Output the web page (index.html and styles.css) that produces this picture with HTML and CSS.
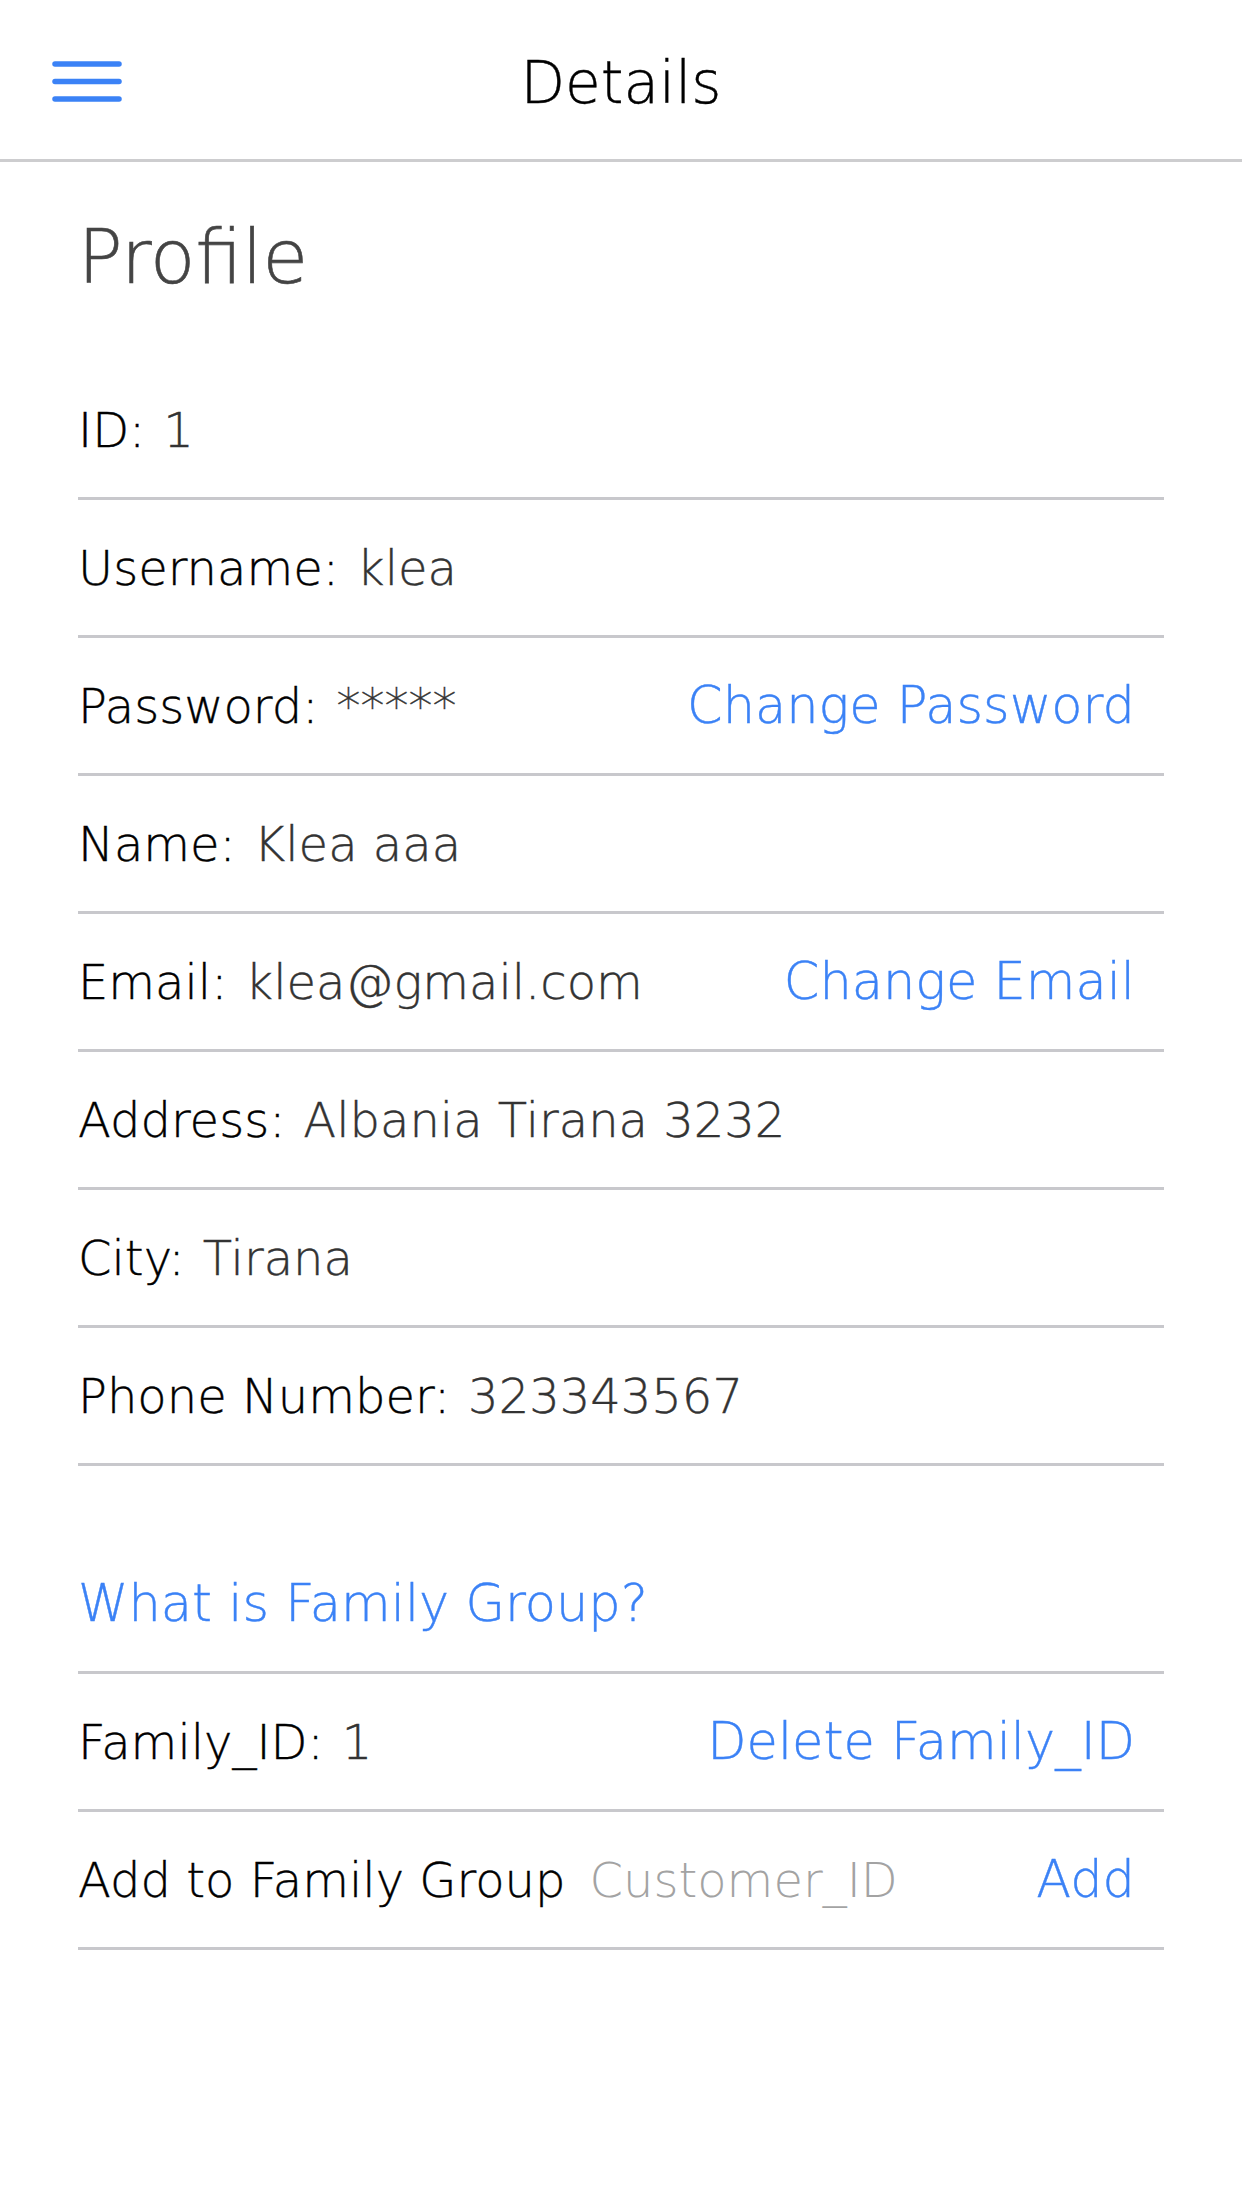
FILE: index.html
```html
<!DOCTYPE html>
<html lang="en">
<head>
<meta charset="utf-8">
<title>Details</title>
<link rel="stylesheet" href="styles.css">
</head>
<body>
<header class="topbar">
  <button class="menu-btn" aria-label="Menu">
    <svg width="70" height="46" viewBox="0 0 70 46">
      <line x1="3" y1="3" x2="67" y2="3"/>
      <line x1="3" y1="20.5" x2="67" y2="20.5"/>
      <line x1="3" y1="38" x2="67" y2="38"/>
    </svg>
  </button>
  <h1 class="topbar-title">Details</h1>
  <span></span>
</header>

<main class="content">
  <h2 class="page-title">Profile</h2>

  <section class="list">
    <div class="row"><span class="label">ID:</span><span class="value">1</span></div>
    <div class="row"><span class="label">Username:</span><span class="value">klea</span></div>
    <div class="row"><span class="label">Password:</span><span class="value">*****</span><a class="link push" href="#">Change Password</a></div>
    <div class="row"><span class="label">Name:</span><span class="value">Klea aaa</span></div>
    <div class="row"><span class="label">Email:</span><span class="value">klea@gmail.com</span><a class="link push" href="#">Change Email</a></div>
    <div class="row"><span class="label">Address:</span><span class="value">Albania Tirana 3232</span></div>
    <div class="row"><span class="label">City:</span><span class="value">Tirana</span></div>
    <div class="row"><span class="label">Phone Number:</span><span class="value">323343567</span></div>
  </section>

  <section class="list family">
    <div class="row"><a class="link" href="#">What is Family Group?</a></div>
    <div class="row"><span class="label">Family_ID:</span><span class="value">1</span><a class="link push" href="#">Delete Family_ID</a></div>
    <div class="row"><span class="label">Add to Family Group</span><input class="field" type="text" placeholder="Customer_ID"><a class="link end" href="#">Add</a></div>
  </section>
</main>
</body>
</html>
```
FILE: styles.css
```css
* { box-sizing: border-box; }

body {
  margin: 0;
  background: #ffffff;
  font-family: "DejaVu Sans", "Noto Sans", sans-serif;
  font-weight: 300;
  color: #000;
}

.topbar {
  height: 162px;
  display: grid;
  grid-template-columns: 1fr auto 1fr;
  align-items: center;
  padding: 0;
  border-bottom: 3px solid #cdcdcf;
}

.menu-btn {
  justify-self: start;
  padding: 0;
  margin: 9px 0 0 52px;
  border: 0;
  background: none;
  display: flex;
}

.menu-btn line {
  stroke: #3b82f6;
  stroke-width: 5.5;
  stroke-linecap: round;
}

.topbar-title {
  margin: 6px 0 0 0;
  font-size: 58px;
  font-weight: 300;
  line-height: 70px;
  color: #000;
  -webkit-text-stroke: 0.4px #000;
}

.content {
  padding: 0 78px;
}

.page-title {
  margin: 45px 0 55px 0;
  font-size: 74px;
  line-height: 100px;
  font-weight: 300;
  color: #444;
  -webkit-text-stroke: 0.6px #444;
}

.list {
  display: flex;
  flex-direction: column;
}

.family {
  margin-top: 70px;
}

.row {
  height: 138px;
  display: flex;
  align-items: center;
  border-bottom: 3px solid #c8c8cc;
  font-size: 48px;
  line-height: 60px;
  white-space: nowrap;
}

.label {
  color: #000;
  -webkit-text-stroke: 0.4px #000;
}

.value {
  margin-left: 18px;
  color: #333;
  -webkit-text-stroke: 0.4px #333;
}

.link {
  color: #3b82f6;
  text-decoration: none;
  font-size: 51px;
  -webkit-text-stroke: 0.4px #3b82f6;
}

.push {
  margin-left: auto;
  margin-right: 29px;
}

.end {
  margin-right: 29px;
}

.field {
  flex: 1;
  min-width: 0;
  margin-left: 24px;
  border: 0;
  outline: none;
  padding: 0;
  background: transparent;
  font: inherit;
  font-weight: 300;
  font-size: 48px;
  color: #333;
}

.field::placeholder {
  color: #a3a3a3;
}
```
